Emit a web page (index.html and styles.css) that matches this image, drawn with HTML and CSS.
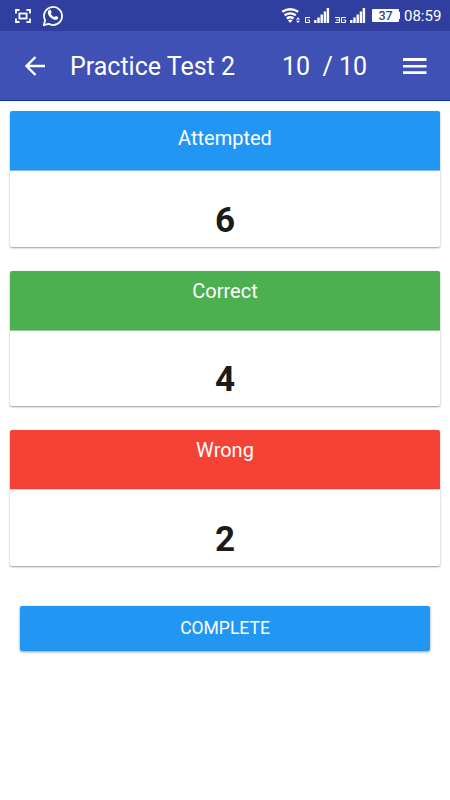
FILE: index.html
```html
<!DOCTYPE html>
<html lang="en">
<head>
  <meta charset="UTF-8" />
  <meta name="viewport" content="width=device-width, initial-scale=1.0" />
  <title>Practice Test 2</title>
  <link rel="stylesheet" href="styles.css">
</head>
<body>
  <div class="status-bar">
    <svg class="capture" width="16" height="14" viewBox="0 0 16 14" fill="none" stroke="#fff" stroke-width="1.8">
      <path d="M1 4.5V1h3.5M11.5 1H15v3.5M15 9.5V13h-3.5M4.5 13H1V9.5" />
      <rect x="4.4" y="4.5" width="7.2" height="5" />
    </svg>
    <svg class="whatsapp" width="22" height="23" viewBox="0 0 22 23">
      <path d="M1.8 21.2l1.3-5A9 9 0 1 1 6.6 19.8z" fill="none" stroke="#fff" stroke-width="1.8" stroke-linejoin="round" />
      <path d="M7.5 5.8c.5-.2 1.1-.1 1.3.4l.8 1.9c.2.5-.8 1.3-.8 1.7.7 1.500 1.900 2.600 3.500 3.300.5.1 1.200-1.300 1.700-1.200l2 1c.5.3.2 1.500-.3 2-1.200 1.200-2.900 1-4.500.3-2.300-1-4.200-2.900-5.100-5-.6-1.500-.2-3.700 1.400-4.400z" fill="#fff" />
    </svg>
    <div class="status-right">
      <svg class="signals" width="87" height="18" viewBox="0 0 87 18" fill="none" stroke="#fff">
        <path d="M3.2 4.8q8-5 16 0M5.6 8.2q5.600-3.600 11.200 0M7.800 11.400q3.400-2.200 6.800 0" stroke-width="2.4" />
        <path d="M8.900 13.200q2.300-1.400 4.600 0L11.200 16z" fill="#fff" stroke="none" />
        <path d="M17 12.500l2-2.300 2 2.300zM17 13.700l2 2.300 2-2.300z" fill="#fff" stroke="none" />
        <path d="M31 10.500h-4.500v5h4V13h-2" stroke-width="1" />
        <path d="M36.300 16v-3M39.500 16v-5.500M42.700 16V7.500M45.900 16V4.500M48.900 16V1" stroke-width="2.4" />
        <path d="M56 10.500h4.500v5H56M57 13h3.500M67 10.500h-4.500v5h4V13h-2" stroke-width="1" />
        <path d="M72.300 16v-3M75.500 16v-5.500M78.700 16V7.500M81.900 16V4.500M84.900 16V1" stroke-width="2.4" />
      </svg>
      <span class="battery">37</span>
      <span class="clock">08:59</span>
    </div>
  </div>

  <div class="toolbar">
    <svg class="back" width="20" height="20" viewBox="0 0 20 20" fill="none" stroke="#fff" stroke-width="2.4">
      <path d="M20 10H2M10.5 1L1.5 10l9 9" />
    </svg>
    <h1 class="title">Practice Test 2</h1>
    <span class="counter">10&nbsp; / 10</span>
    <svg class="menu" width="24" height="17" viewBox="0 0 24 17" fill="#fff">
      <path d="M0 0h23.500v3H0zM0 7h23.500v2.600H0zM0 13.300h23.500V16H0z" />
    </svg>
  </div>

  <div class="results">
    <div class="card attempted">
      <div class="card-header">Attempted</div>
      <div class="card-value">6</div>
    </div>
    <div class="card correct">
      <div class="card-header">Correct</div>
      <div class="card-value">4</div>
    </div>
    <div class="card wrong">
      <div class="card-header">Wrong</div>
      <div class="card-value">2</div>
    </div>
    <button type="button" class="btn">COMPLETE</button>
  </div>
</body>
</html>
```
FILE: styles.css
```css
* {
  box-sizing: border-box;
}
body {
  margin: 0;
  font-family: Roboto, sans-serif;
  background: #fff;
  color: #fff;
}
.status-bar {
  display: flex;
  height: 31px;
  padding: 0 8px 0 15px;
  background: #303f9f;
}
.capture {
  margin-top: 9px;
}
.whatsapp {
  margin: 4px 0 0 11px;
}
.status-right {
  display: flex;
  margin-left: auto;
}
.signals {
  margin-top: 7px;
}
.battery {
  width: 27px;
  height: 13px;
  margin: 9px 0 0 6px;
  border-radius: 1px;
  background: #fff;
  color: #303f9f;
  font-size: 12.5px;
  font-weight: 500;
  line-height: 14px;
  text-align: center;
}
.battery::after {
  content: "";
  display: block;
  width: 2px;
  height: 7px;
  margin: -11px 0 0 26px;
  background: #fff;
}
.clock {
  width: 38px;
  margin-left: 5px;
  font-size: 15px;
  font-weight: 400;
  line-height: 33px;
  white-space: nowrap;
}
.toolbar {
  display: flex;
  align-items: center;
  height: 70px;
  padding: 1px 23px 0 25px;
  border-bottom: 1px solid #0d35ae;
  background: #3f51b5;
}
.back {
  margin-bottom: 1px;
}
.title {
  width: 212px;
  margin: 1px 0 0 25px;
  font-size: 25px;
  font-weight: 400;
}
.counter {
  margin-top: 1px;
  font-size: 25px;
  white-space: nowrap;
}
.menu {
  margin: 1px 0 0 auto;
}
.results {
  display: flex;
  flex-direction: column;
  padding: 10px;
}
.card {
  height: 136px;
  margin-bottom: 24px;
  border-radius: 2px;
  background: #fff;
  box-shadow: 0 1px 2px rgba(0, 0, 0, 0.4);
  text-align: center;
}
.card.correct {
  height: 135px;
}
.card-header {
  height: 60px;
  padding-top: 8px;
  border-bottom: 1px solid;
  border-radius: 2px 2px 0 0;
  font-size: 20px;
  line-height: 24px;
}
.attempted .card-header {
  padding-top: 15px;
  border-color: #82b9f2;
  background: #2196f3;
}
.correct .card-header {
  border-color: #94cb96;
  background: #4caf50;
}
.wrong .card-header {
  border-color: #e3d3d2;
  background: #f44336;
}
.card-value {
  padding-top: 30px;
  color: #1b1b1b;
  font-size: 35px;
  font-weight: 700;
  line-height: 40px;
}
.correct .card-value {
  padding-top: 29px;
}
.btn {
  height: 45px;
  margin: 16px 10px 0;
  padding: 0 0 2px;
  border: none;
  border-radius: 2px;
  background: #2196f3;
  box-shadow: 0 1px 3px rgba(0, 0, 0, 0.4);
  color: #fff;
  font-family: inherit;
  font-size: 17.5px;
  cursor: pointer;
}
```
